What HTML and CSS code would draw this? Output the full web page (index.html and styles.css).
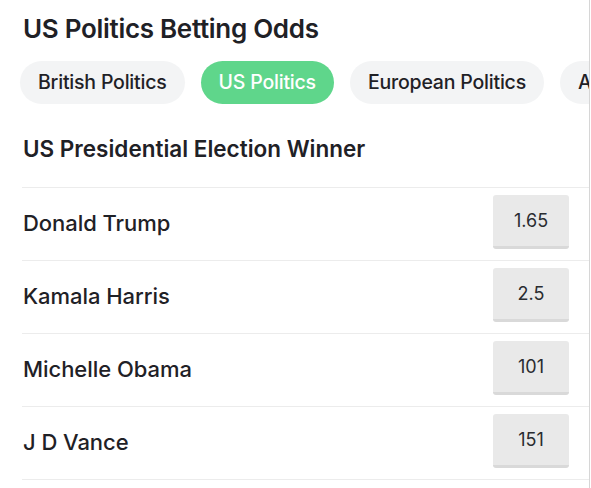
FILE: index.html
```html
<!DOCTYPE html>
<html>
<head>
<meta charset="utf-8">
<link rel="stylesheet" href="styles.css">
</head>
<body>
<div class="page">
  <h1 class="title">US Politics Betting Odds</h1>
  <div class="tabs">
    <span class="pill">British Politics</span>
    <span class="pill active">US Politics</span>
    <span class="pill">European Politics</span>
    <span class="pill">Australian Politics</span>
  </div>
  <h2 class="market">US Presidential Election Winner</h2>
  <div class="rows">
    <div class="row"><span class="name">Donald Trump</span><span class="odds">1.65</span></div>
    <div class="row"><span class="name">Kamala Harris</span><span class="odds">2.5</span></div>
    <div class="row"><span class="name">Michelle Obama</span><span class="odds">101</span></div>
    <div class="row"><span class="name">J D Vance</span><span class="odds">151</span></div>
  </div>
</div>
</body>
</html>
```
FILE: styles.css
```css
html, body {
  margin: 0;
  padding: 0;
  background: #fff;
  overflow: hidden;
}
body {
  font-family: Inter, "Noto Sans", sans-serif;
  color: #1f2126;
  width: 591px;
  height: 488px;
}
.page {
  width: 590px;
  height: 488px;
  border-right: 1px solid #d6d6d6;
  box-sizing: border-box;
  padding-left: 22px;
  overflow: hidden;
}
.title {
  margin: 0;
  padding: 13px 0 0 1px;
  font-size: 26px;
  font-weight: 600;
  line-height: 32px;
  letter-spacing: -0.3px;
}
.tabs {
  display: flex;
  gap: 16px;
  margin-top: 16px;
  margin-left: -2px;
  white-space: nowrap;
}
.pill {
  flex: none;
  height: 43px;
  line-height: 43px;
  padding: 0 18px;
  border-radius: 22px;
  background: #f3f4f5;
  font-size: 19.5px;
  font-weight: 500;
  color: #1f2126;
  letter-spacing: -0.2px;
}
.pill.active {
  background: #5fd68b;
  color: #fff;
}
.market {
  margin: 0;
  padding: 31px 0 0 1px;
  font-size: 22.5px;
  font-weight: 600;
  line-height: 28px;
  letter-spacing: 0;
}
.rows {
  margin-top: 24px;
  border-top: 1px solid #ececec;
}
.row {
  display: flex;
  align-items: center;
  justify-content: space-between;
  height: 72px;
  border-bottom: 1px solid #ececec;
  padding-right: 20px;
}
.name {
  font-size: 22px;
  font-weight: 500;
  padding-left: 1px;
  margin-top: -3px;
  letter-spacing: -0.05px;
}
.odds {
  width: 76px;
  height: 51px;
  line-height: 52px;
  margin-top: -4px;
  text-align: center;
  background: #e9e9e9;
  border-radius: 3px;
  border-bottom: 3px solid #d9d9d9;
  font-size: 18px;
  font-weight: 400;
  color: #2a2c30;
}
```
